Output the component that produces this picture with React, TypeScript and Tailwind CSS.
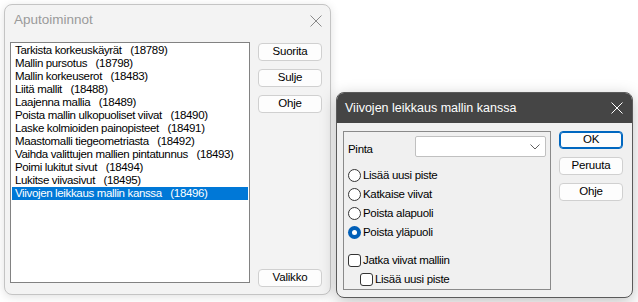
import React from "react";

const items = [
  "Tarkista korkeuskäyrät   (18789)",
  "Mallin pursotus   (18798)",
  "Mallin korkeuserot   (18483)",
  "Liitä mallit   (18488)",
  "Laajenna mallia   (18489)",
  "Poista mallin ulkopuoliset viivat   (18490)",
  "Laske kolmioiden painopisteet   (18491)",
  "Maastomalli tiegeometriasta   (18492)",
  "Vaihda valittujen mallien pintatunnus   (18493)",
  "Poimi lukitut sivut   (18494)",
  "Lukitse viivasivut   (18495)",
  "Viivojen leikkaus mallin kanssa   (18496)",
];

function CloseX({ color }: { color: string }) {
  return (
    <svg width="12" height="12" viewBox="0 0 12 12">
      <path d="M0.5 0.5 L11.5 11.5 M11.5 0.5 L0.5 11.5" stroke={color} strokeWidth="1" fill="none" />
    </svg>
  );
}

function Btn({ label, focus }: { label: string; focus?: boolean }) {
  return (
    <div
      className={
        "w-[64px] h-[18px] rounded-[4px] flex items-center justify-center bg-[#fdfdfd] text-[11.5px] tracking-[-0.2px] text-black " +
        (focus ? "border border-[#0067c0] shadow-[inset_0_0_0_1px_#0067c0]" : "border border-[#d0d0d0]")
      }
    >
      {label}
    </div>
  );
}

function Radio({ checked, label }: { checked?: boolean; label: string }) {
  return (
    <div className="h-[19px] flex items-center">
      {checked ? (
        <div className="w-[13px] h-[13px] rounded-full bg-[#005fb8] flex items-center justify-center">
          <div className="w-[5px] h-[5px] rounded-full bg-white" />
        </div>
      ) : (
        <div className="w-[13px] h-[13px] rounded-full border border-[#333] bg-white" />
      )}
      <span className="ml-[2px]">{label}</span>
    </div>
  );
}

function Check({ label, indent }: { label: string; indent?: boolean }) {
  return (
    <div className={"h-[19px] flex items-center " + (indent ? "pl-[12px]" : "")}>
      <div className="w-[13px] h-[13px] rounded-[3px] border border-[#333] bg-white" />
      <span className="ml-[2px]">{label}</span>
    </div>
  );
}

export default function App() {
  return (
    <div
      className="relative w-[638px] h-[302px] bg-white overflow-hidden text-black"
      style={{ fontFamily: '"Liberation Sans", Arial, sans-serif' }}
    >
      {/* Window 1 */}
      <div className="absolute left-[4px] top-[4px] w-[327px] h-[291px] rounded-[8px] border border-[#c4c4c4] bg-[#f3f3f3] shadow-[0_2px_10px_rgba(0,0,0,0.12)] flex flex-col">
        <div className="h-[31px] flex items-center justify-between pl-[9px] pr-[8px]">
          <span className="text-[13.5px] text-[#9a9a9a]">Aputoiminnot</span>
          <CloseX color="#8a8a8a" />
        </div>
        <div className="flex pl-[5px] pt-[6px] gap-[8px]">
          <div className="w-[240px] h-[241px] border border-[#828282] bg-white pt-[1px] px-[1px] text-[11.5px] tracking-[-0.35px] leading-[13px]">
            {items.map((t, i) => (
              <div
                key={i}
                className={
                  "h-[13px] pl-[3px] whitespace-pre " +
                  (i === items.length - 1 ? "bg-[#0078d7] text-white" : "")
                }
              >
                {t}
              </div>
            ))}
          </div>
          <div className="flex flex-col pt-[1px]">
            <div className="flex flex-col gap-[8px]">
              <Btn label="Suorita" />
              <Btn label="Sulje" />
              <Btn label="Ohje" />
            </div>
            <div className="mt-auto mb-[-4px]">
              <Btn label="Valikko" />
            </div>
          </div>
        </div>
      </div>

      {/* Window 2 */}
      <div className="absolute left-[336px] top-[92px] w-[297px] h-[206px] rounded-[8px] border border-[#5a5a5a] bg-[#f0f0f0] shadow-[0_4px_16px_rgba(0,0,0,0.25)] flex flex-col overflow-hidden">
        <div className="h-[30px] bg-[#454545] flex items-center justify-between pl-[8px] pr-[9px]">
          <span className="text-[12.5px] text-white">Viivojen leikkaus mallin kanssa</span>
          <CloseX color="#ffffff" />
        </div>
        <div className="flex pl-[6px] pt-[8px] gap-[8px] text-[11.5px] tracking-[-0.3px]">
          <div className="w-[208px] h-[159px] border border-[#8a8a8a] flex flex-col px-[4px] pt-[4px]">
            <div className="h-[21px] flex items-center">
              <span className="w-[67px] pt-[6px]">Pinta</span>
              <div className="w-[131px] h-[21px] bg-white border border-[#c0c0c0] rounded-[2px] flex items-center justify-end pr-[5px]">
                <svg width="10" height="6" viewBox="0 0 10 6">
                  <path d="M0.5 0.5 L5 5 L9.5 0.5" stroke="#606060" strokeWidth="1" fill="none" />
                </svg>
              </div>
            </div>
            <div className="mt-[9px] flex flex-col">
              <Radio label="Lisää uusi piste" />
              <Radio label="Katkaise viivat" />
              <Radio label="Poista alapuoli" />
              <Radio checked label="Poista yläpuoli" />
            </div>
            <div className="mt-[9px] flex flex-col">
              <Check label="Jatka viivat malliin" />
              <Check indent label="Lisää uusi piste" />
            </div>
          </div>
          <div className="flex flex-col gap-[8px]">
            <Btn label="OK" focus />
            <Btn label="Peruuta" />
            <Btn label="Ohje" />
          </div>
        </div>
      </div>
    </div>
  );
}
